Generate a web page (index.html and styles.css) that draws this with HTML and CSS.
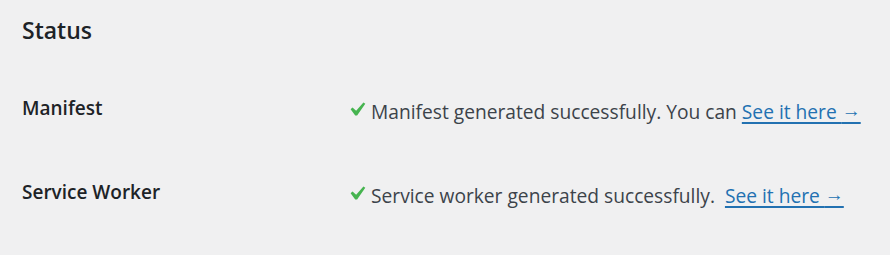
FILE: index.html
```html
<!DOCTYPE html>
<html lang="en">
<head>
<meta charset="utf-8">
<title>Status</title>
<link rel="stylesheet" href="styles.css">
</head>
<body>
<div class="wrap">
  <h2 class="title">Status</h2>
  <div class="form-table">
    <div class="row">
      <div class="label">Manifest</div>
      <div class="field">
        <svg class="check" viewBox="5.5 4.6 11 9.9" aria-hidden="true"><path d="M14.83 4.89l1.34.94-5.81 8.38H9.02L5.78 9.67l1.34-1.25 2.57 2.4z"/></svg>
        <span class="desc">Manifest generated successfully. You can <a href="#">See it here <span class="arrow">→</span></a></span>
      </div>
    </div>
    <div class="row">
      <div class="label">Service Worker</div>
      <div class="field">
        <svg class="check" viewBox="5.5 4.6 11 9.9" aria-hidden="true"><path d="M14.83 4.89l1.34.94-5.81 8.38H9.02L5.78 9.67l1.34-1.25 2.57 2.4z"/></svg>
        <span class="desc">Service worker generated successfully.&nbsp; <a href="#">See it here <span class="arrow">→</span></a></span>
      </div>
    </div>
  </div>
</div>
</body>
</html>
```

FILE: styles.css
```css
html, body {
  margin: 0;
  padding: 0;
  background: #f0f0f1;
}
body {
  font-family: "Open Sans", "Noto Sans", "Liberation Sans", sans-serif;
  color: #1d2327;
}
.wrap {
  padding: 0 22px;
}
.title {
  margin: 15px 0 0;
  font-size: 23px;
  line-height: 30px;
  font-weight: 600;
  color: #1d2327;
}
.form-table {
  margin-top: 35px;
}
.row {
  display: grid;
  grid-template-columns: 328px 1fr;
  height: 84px;
}
.label {
  padding-top: 14px;
  font-size: 19px;
  line-height: 28px;
  font-weight: 600;
  color: #1d2327;
}
.field {
  padding-top: 17px;
  display: flex;
  align-items: center;
  height: 28px;
}
.check {
  width: 16px;
  height: 14px;
  fill: #46b450;
  margin-right: 5px;
  flex: none;
  position: relative;
  top: -2px;
}
.desc {
  font-size: 19.2px;
  line-height: 28px;
  color: #3c434a;
  white-space: nowrap;
}
.desc a {
  color: #2271b1;
  text-decoration: underline;
  text-decoration-thickness: 2px;
  text-underline-offset: 3px;
}
.arrow {
  font-family: "Liberation Sans", sans-serif;
  font-size: 19px;
  vertical-align: 2px;
}
```
